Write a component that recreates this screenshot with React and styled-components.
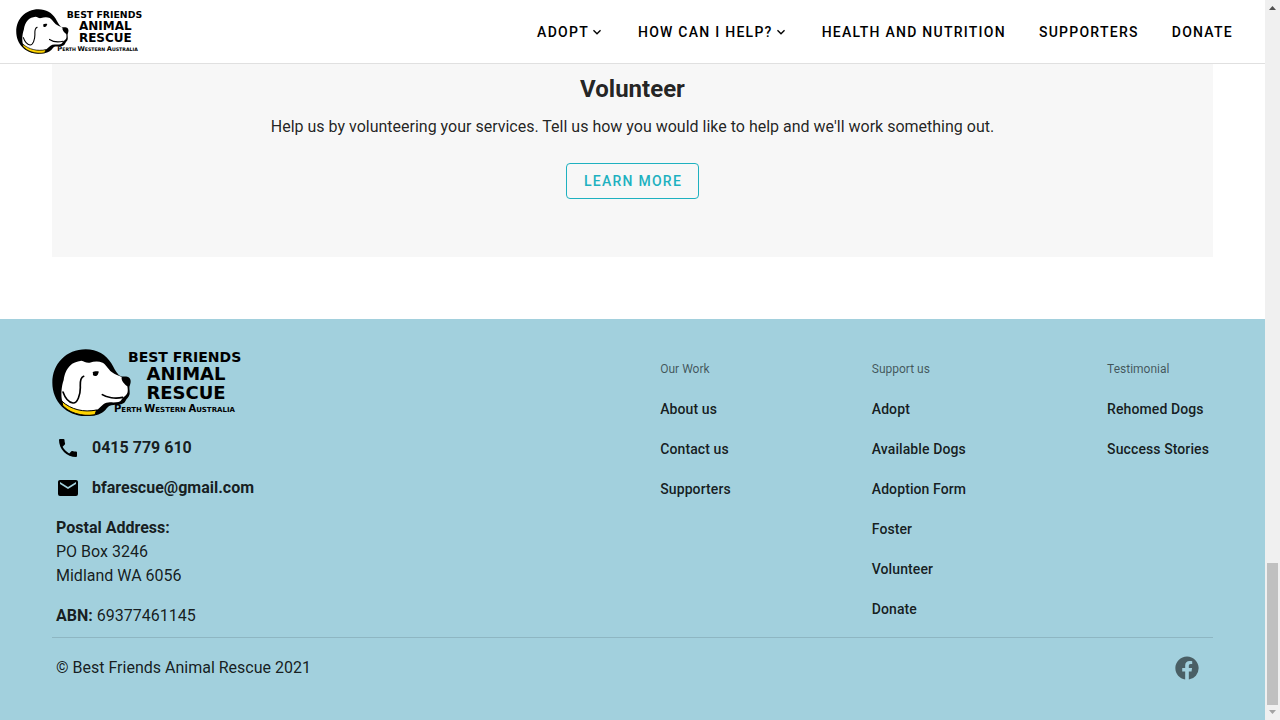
import React from "react";
import styled, { createGlobalStyle } from "styled-components";

const GlobalStyle = createGlobalStyle`
  *, *::before, *::after { box-sizing: border-box; }
  body {
    margin: 0;
    background: #fff;
    color: rgba(0, 0, 0, 0.87);
    font-family: Roboto, sans-serif;
    font-size: 16px;
    line-height: 24px;
  }
  h2, h3, p, ul, address { margin: 0; padding: 0; font-style: normal; }
  ul { list-style: none; }
  a { color: inherit; text-decoration: none; }
`;

const Page = styled.div`
  display: flex;
  min-height: 100vh;
`;

const Content = styled.div`
  display: flex;
  flex: 1;
  flex-direction: column;
  min-width: 0;
`;

const Header = styled.header`
  display: flex;
  align-items: center;
  justify-content: space-between;
  height: 64px;
  padding: 0 32px 0 16px;
  border-bottom: 1px solid #e0e0e0;
  background: #fff;
`;

const LogoSvg = styled.svg`
  display: block;
  width: ${(p) => p.$width}px;
  height: auto;
  font-family: "DejaVu Sans", sans-serif;
  font-weight: 700;
`;

const Nav = styled.nav`
  display: flex;
  align-items: center;
  gap: 33px;
`;

const NavItem = styled.a`
  display: flex;
  align-items: center;
  padding: 0;
  border: 0;
  background: none;
  color: #000;
  font: 500 14px/20px Roboto, sans-serif;
  letter-spacing: 0.09em;
  text-transform: uppercase;
  white-space: nowrap;
  cursor: pointer;
`;

const Icon = styled.svg`
  display: block;
  flex: none;
  width: ${(p) => p.$size}px;
  height: ${(p) => p.$size}px;
  fill: currentColor;
`;

const Main = styled.main`
  padding: 0 52px 62px;
`;

const VolunteerCard = styled.section`
  display: flex;
  flex-direction: column;
  align-items: center;
  padding: 9px 16px 58px;
  background: #f7f7f7;
  text-align: center;
`;

const CardTitle = styled.h2`
  font-size: 24px;
  font-weight: 700;
  line-height: 32px;
`;

const CardText = styled.p`
  margin: 10px 0 24px;
`;

const OutlineButton = styled.button`
  height: 36px;
  padding: 0 16px 0 17px;
  border: 1px solid #1eb1c0;
  border-radius: 4px;
  background: transparent;
  color: #1eb1c0;
  font: 500 14px/20px Roboto, sans-serif;
  letter-spacing: 0.09em;
  text-transform: uppercase;
  cursor: pointer;
`;

const Footer = styled.footer`
  flex: 1;
  padding: 30px 52px 0;
  background: #a2d0dd;
`;

const FooterTop = styled.div`
  display: flex;
  justify-content: space-between;
  padding-bottom: 8px;
  border-bottom: 1px solid rgba(0, 0, 0, 0.12);
`;

const Contact = styled.div`
  display: flex;
  flex-direction: column;
`;

const ContactList = styled.address`
  padding: 12px 0 8px 4px;
`;

const ContactLink = styled.a`
  display: flex;
  align-items: center;
  gap: 12px;
  height: 40px;
  font-weight: 700;

  svg { color: #000; }
`;

const Details = styled.p`
  padding-left: 4px;
  margin-bottom: ${(p) => (p.$last ? 0 : 16)}px;
`;

const LinkColumns = styled.div`
  display: flex;
  gap: 141px;
  padding-right: 4px;
`;

const ColumnTitle = styled.h3`
  color: rgba(0, 0, 0, 0.6);
  font-size: 12px;
  font-weight: 400;
  line-height: 40px;
`;

const ColumnLink = styled.a`
  display: block;
  font-size: 14px;
  font-weight: 500;
  letter-spacing: 0.007em;
  line-height: 40px;
  white-space: nowrap;
`;

const FooterBottom = styled.div`
  display: flex;
  align-items: center;
  justify-content: space-between;
  height: 60px;
  padding: 0 12px 0 4px;
`;

const SocialLink = styled.a`
  color: rgba(0, 0, 0, 0.54);
`;

const ScrollTrack = styled.div`
  position: sticky;
  top: 0;
  display: flex;
  flex: none;
  flex-direction: column;
  align-items: center;
  justify-content: space-between;
  width: 15px;
  height: 100vh;
  background: #f0f0f0;
`;

const ScrollThumb = styled.div`
  width: 11px;
  height: 142px;
  margin-top: auto;
  background: #c0c0c0;
`;

const ScrollArrow = styled.svg`
  display: block;
  width: 15px;
  height: 15px;
  fill: ${(p) => p.$color};
`;

const icons = {
  chevron: "M7.41,8.58L12,13.17L16.59,8.58L18,10L12,16L6,10L7.41,8.58Z",
  phone:
    "M6.62,10.79C8.06,13.62 10.38,15.94 13.21,17.38L15.41,15.18C15.69,14.9 16.08,14.82 16.43,14.93C17.55,15.3 18.75,15.5 20,15.5A1,1 0 0,1 21,16.5V20A1,1 0 0,1 20,21A17,17 0 0,1 3,4A1,1 0 0,1 4,3H7.5A1,1 0 0,1 8.5,4C8.5,5.25 8.7,6.45 9.07,7.57C9.18,7.92 9.1,8.31 8.82,8.59L6.62,10.79Z",
  email:
    "M20,8L12,13L4,8V6L12,11L20,6M20,4H4C2.89,4 2,4.89 2,6V18A2,2 0 0,0 4,20H20A2,2 0 0,0 22,18V6C22,4.89 21.1,4 20,4Z",
  facebook:
    "M12 2.04C6.5 2.04 2 6.53 2 12.06C2 17.06 5.66 21.21 10.44 21.96V14.96H7.9V12.06H10.44V9.85C10.44 7.34 11.93 5.96 14.22 5.96C15.31 5.96 16.45 6.15 16.45 6.15V8.62H15.19C13.95 8.62 13.56 9.39 13.56 10.18V12.06H16.34L15.89 14.96H13.56V21.96A10 10 0 0 0 22 12.06C22 6.53 17.5 2.04 12 2.04Z",
};

function Glyph({ name, size = 24 }) {
  return (
    <Icon $size={size} viewBox="0 0 24 24" aria-hidden="true">
      <path d={icons[name]} />
    </Icon>
  );
}

function Logo({ width }) {
  return (
    <LogoSvg $width={width} viewBox="0 0 192 67" role="img" aria-label="Best Friends Animal Rescue">
      <g transform="scale(0.3333) translate(-6 -11)">
        <path d="M107 12C142 12 168 28 184 54C192 67 197 80 207 90C215 96 222 92 232 94C243 97 244 109 240 119C236 126 240 135 239 146C237 156 229 160 226 168C219 181 200 177 184 180C170 183 169 196 156 202C143 210 126 212 107 212C49 212 7 168 7 112C7 56 49 12 107 12Z" />
        <path
          fill="#fff"
          d="M60 61C68 52 80 48 94 46C103 47 108 54 119 52C132 48 146 47 158 52C168 57 174 71 185 80C195 88 207 90 215 95C213 106 223 116 232 123C234 134 235 145 226 151C221 155 217 158 214 164C210 171 197 172 180 171C164 171 157 180 148 188C143 194 137 194 130 195C96 202 57 192 37 168C32 152 34 123 41 104C44 85 49 73 60 61Z"
        />
        <path
          fill="none"
          stroke="#000"
          strokeWidth="5"
          strokeLinecap="round"
          d="M101 93C88 98 91 116 91 127C91 147 83 174 69 173C55 171 45 157 39 140M157 148C170 157 196 161 218 156"
        />
        <path d="M128 81C132 78 140 77 147 79C144 83 145 92 136 92C129 92 128 88 129 85Z" />
        <path
          fill="#ffd400"
          stroke="#000"
          strokeWidth="3"
          d="M36 168C63 193 102 202 140 194L135 208C95 216 53 200 38 180Z"
        />
      </g>
      <text x="76" y="13" fontSize="14">BEST FRIENDS</text>
      <text x="134" y="31" fontSize="18" textAnchor="middle">ANIMAL</text>
      <text x="134" y="50" fontSize="18" textAnchor="middle">RESCUE</text>
      <text x="62" y="63" fontSize="7">
        <tspan fontSize="10">P</tspan>ERTH <tspan fontSize="10">W</tspan>ESTERN <tspan fontSize="10">A</tspan>USTRALIA
      </text>
    </LogoSvg>
  );
}

const navItems = [
  { label: "Adopt", menu: true },
  { label: "How can I help?", menu: true },
  { label: "Health and Nutrition" },
  { label: "Supporters" },
  { label: "Donate" },
];

const columns = [
  { title: "Our Work", links: ["About us", "Contact us", "Supporters"] },
  {
    title: "Support us",
    links: ["Adopt", "Available Dogs", "Adoption Form", "Foster", "Volunteer", "Donate"],
  },
  { title: "Testimonial", links: ["Rehomed Dogs", "Success Stories"] },
];

export default function App() {
  return (
    <>
      <GlobalStyle />
      <Page>
        <Content>
          <Header>
            <a href="#home">
              <Logo width={128} />
            </a>
            <Nav>
              {navItems.map(({ label, menu }) =>
                menu ? (
                  <NavItem as="button" type="button" aria-haspopup="menu" key={label}>
                    {label}
                    <Glyph name="chevron" size={16} />
                  </NavItem>
                ) : (
                  <NavItem href="#page" key={label}>
                    {label}
                  </NavItem>
                )
              )}
            </Nav>
          </Header>

          <Main>
            <VolunteerCard>
              <CardTitle>Volunteer</CardTitle>
              <CardText>
                Help us by volunteering your services. Tell us how you would like to help and we'll
                work something out.
              </CardText>
              <OutlineButton type="button">Learn more</OutlineButton>
            </VolunteerCard>
          </Main>

          <Footer>
            <FooterTop>
              <Contact>
                <Logo width={192} />
                <ContactList>
                  <ContactLink href="tel:0415779610">
                    <Glyph name="phone" />
                    0415 779 610
                  </ContactLink>
                  <ContactLink href="mailto:bfarescue@gmail.com">
                    <Glyph name="email" />
                    bfarescue@gmail.com
                  </ContactLink>
                </ContactList>
                <Details>
                  <strong>Postal Address:</strong>
                  <br />
                  PO Box 3246
                  <br />
                  Midland WA 6056
                </Details>
                <Details $last>
                  <strong>ABN:</strong> 69377461145
                </Details>
              </Contact>
              <LinkColumns>
                {columns.map(({ title, links }) => (
                  <section key={title}>
                    <ColumnTitle>{title}</ColumnTitle>
                    <ul>
                      {links.map((link) => (
                        <li key={link}>
                          <ColumnLink href="#page">{link}</ColumnLink>
                        </li>
                      ))}
                    </ul>
                  </section>
                ))}
              </LinkColumns>
            </FooterTop>
            <FooterBottom>
              <p>© Best Friends Animal Rescue 2021</p>
              <SocialLink href="#facebook" aria-label="Facebook">
                <Glyph name="facebook" size={28} />
              </SocialLink>
            </FooterBottom>
          </Footer>
        </Content>

        <ScrollTrack aria-hidden="true">
          <ScrollArrow $color="#505050" viewBox="0 0 15 15">
            <path d="M4 10L7.5 6L11 10Z" />
          </ScrollArrow>
          <ScrollThumb />
          <ScrollArrow $color="#a3a3a3" viewBox="0 0 15 15">
            <path d="M4 5L7.5 9L11 5Z" />
          </ScrollArrow>
        </ScrollTrack>
      </Page>
    </>
  );
}
